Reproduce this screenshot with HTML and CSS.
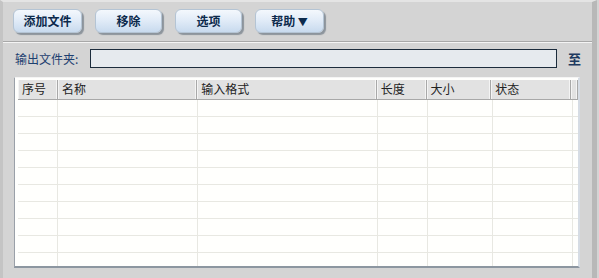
FILE: index.html
```html
<!DOCTYPE html>
<html lang="zh">
<head>
<meta charset="utf-8">
<link rel="stylesheet" href="styles.css">
</head>
<body>
<div class="window">
  <div class="toolbar">
    <button class="btn w69">添加文件</button>
    <button class="btn w67">移除</button>
    <button class="btn w67">选项</button>
    <button class="btn w69">帮助 <span class="arrow">▼</span></button>
  </div>
  <div class="sep"></div>
  <div class="outrow">
    <span class="label">输出文件夹:</span>
    <div class="input"></div>
    <span class="to">至</span>
  </div>
  <div class="table">
    <div class="thead">
      <div class="th c1">序号</div>
      <div class="th c2">名称</div>
      <div class="th c3">输入格式</div>
      <div class="th c4">长度</div>
      <div class="th c5">大小</div>
      <div class="th c6">状态</div>
      <div class="th c7"></div>
    </div>
    <div class="tbody">
      <div class="row"><div class="td c1"></div><div class="td c2"></div><div class="td c3"></div><div class="td c4"></div><div class="td c5"></div><div class="td c6"></div></div>
      <div class="row"><div class="td c1"></div><div class="td c2"></div><div class="td c3"></div><div class="td c4"></div><div class="td c5"></div><div class="td c6"></div></div>
      <div class="row"><div class="td c1"></div><div class="td c2"></div><div class="td c3"></div><div class="td c4"></div><div class="td c5"></div><div class="td c6"></div></div>
      <div class="row"><div class="td c1"></div><div class="td c2"></div><div class="td c3"></div><div class="td c4"></div><div class="td c5"></div><div class="td c6"></div></div>
      <div class="row"><div class="td c1"></div><div class="td c2"></div><div class="td c3"></div><div class="td c4"></div><div class="td c5"></div><div class="td c6"></div></div>
      <div class="row"><div class="td c1"></div><div class="td c2"></div><div class="td c3"></div><div class="td c4"></div><div class="td c5"></div><div class="td c6"></div></div>
      <div class="row"><div class="td c1"></div><div class="td c2"></div><div class="td c3"></div><div class="td c4"></div><div class="td c5"></div><div class="td c6"></div></div>
      <div class="row"><div class="td c1"></div><div class="td c2"></div><div class="td c3"></div><div class="td c4"></div><div class="td c5"></div><div class="td c6"></div></div>
      <div class="row"><div class="td c1"></div><div class="td c2"></div><div class="td c3"></div><div class="td c4"></div><div class="td c5"></div><div class="td c6"></div></div>
      <div class="row last"><div class="td c1"></div><div class="td c2"></div><div class="td c3"></div><div class="td c4"></div><div class="td c5"></div><div class="td c6"></div></div>
    </div>
  </div>
</div>
</body>
</html>
```
FILE: styles.css
```css
html, body {
  margin: 0;
  padding: 0;
  width: 599px;
  height: 278px;
  overflow: hidden;
  background: #d4d4d4;
  font-family: "Noto Sans CJK SC", "DejaVu Sans", sans-serif;
}
.window {
  width: 597px;
  height: 278px;
  box-sizing: border-box;
  border-left: 3px solid #c4c4c4;
  border-right: 5px solid #b8b8b8;
  border-top: 2px solid #e4e4e4;
  display: flex;
  flex-direction: column;
}
.toolbar {
  height: 39px;
  box-sizing: border-box;
  padding: 7px 0 0 10px;
  display: flex;
  gap: 13px;
  align-items: flex-start;
}
.btn {
  height: 24px;
  border: 1px solid #b4c4d4;
  border-radius: 6px;
  background: linear-gradient(#f4f8fd 0%, #e2ecf8 45%, #c8daee 100%);
  box-shadow: 2px 2px 1px #8c949c;
  color: #0c2a4c;
  font-family: "Noto Sans CJK SC", sans-serif;
  font-weight: bold;
  font-size: 12px;
  padding: 0;
  line-height: 20px;
}
.w69 { width: 69px; }
.w67 { width: 67px; }
.arrow { font-size: 10px; }
.sep {
  height: 0;
  border-top: 1px solid #a8a8a8;
  border-bottom: 1px solid #f4f4f4;
}
.outrow {
  height: 34px;
  display: flex;
  align-items: center;
  padding-left: 12px;
  box-sizing: border-box;
  padding-bottom: 3px;
}
.label {
  font-size: 12px;
  color: #1e4070;
  width: 75px;
}
.input {
  width: 465px;
  height: 17px;
  border: 1px solid #1c2c3c;
  background: #e6eaee;
}
.to {
  margin-left: 11px;
  font-size: 13px;
  font-weight: bold;
  color: #1e3a60;
}
.table {
  margin-left: 11px;
  width: 566px;
  height: 191px;
  box-sizing: border-box;
  border: 1px solid #f0f0f0;
  border-left-color: #9aa0a8;
  border-top-color: #f4f4f4;
  border-right: 2px solid #d6dce4;
  border-bottom: 2px solid #8c96a0;
  background: #fffffd;
  padding: 2px 0 0 3px;
  display: flex;
  flex-direction: column;
  overflow: hidden;
}
.thead {
  display: flex;
  height: 19px;
  background: #e2e2e2;
  border-bottom: 1px solid #a8a8a8;
  flex: none;
}
.th {
  box-sizing: border-box;
  font-size: 12px;
  color: #222;
  line-height: 18px;
  padding-left: 4px;
  border-right: 1px solid #a8a8a8;
  box-shadow: inset -1px 0 0 #f4f4f4, inset 1px 0 0 #f4f4f4;
}
.c1 { width: 40px; }
.c2 { width: 140px; }
.c3 { width: 180px; }
.c4 { width: 50px; }
.c5 { width: 65px; }
.c6 { width: 80px; }
.c7 { width: 7px; padding: 0; }
.row {
  display: flex;
  height: 17px;
  border-bottom: 1px solid #e8e8e2;
  box-sizing: border-box;
  flex: none;
}
.td {
  box-sizing: border-box;
  border-right: 1px solid #e8e8e2;
  height: 100%;
}
```
